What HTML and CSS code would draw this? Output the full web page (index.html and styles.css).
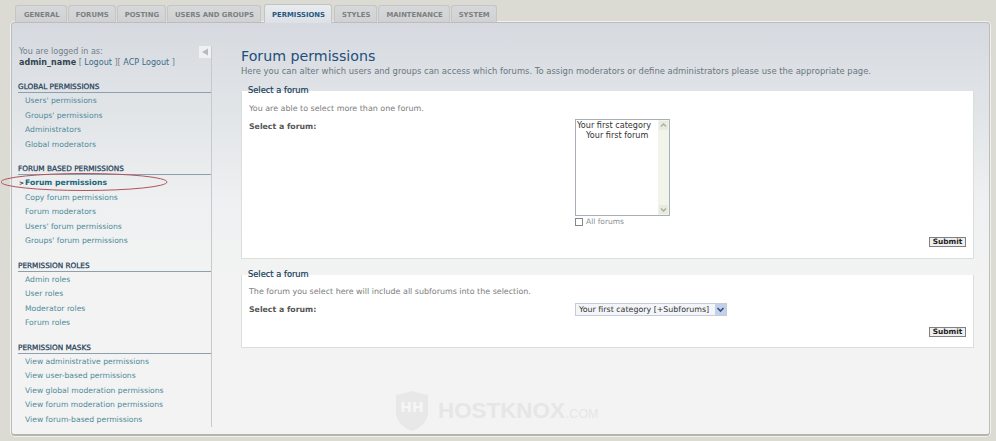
FILE: index.html
```html
<!DOCTYPE html>
<html lang="en">
<head>
<meta charset="utf-8">
<title>Forum permissions</title>
<link rel="stylesheet" href="styles.css">
</head>
<body>
<nav class="tabs">
  <a class="tab">GENERAL</a><a class="tab">FORUMS</a><a class="tab">POSTING</a><a class="tab">USERS AND GROUPS</a><a class="tab active">PERMISSIONS</a><a class="tab">STYLES</a><a class="tab">MAINTENANCE</a><a class="tab">SYSTEM</a>
</nav>
<div class="panel">
  <aside class="side">
    <div class="user">
      <div>You are logged in as:</div>
      <div><b>admin_name</b> [ <a>Logout</a> ][ <a>ACP Logout</a> ]</div>
      <span class="collapse"><svg width="12" height="12" viewBox="0 0 12 12"><rect width="12" height="12" fill="#eef0f2"/><path d="M9 2.500V9.500L3 6Z" fill="#b4bac0"/></svg></span>
    </div>
    <h3 class="head">GLOBAL PERMISSIONS</h3>
    <ul class="menu">
      <li>Users' permissions</li><li>Groups' permissions</li><li>Administrators</li><li>Global moderators</li>
    </ul>
    <h3 class="head">FORUM BASED PERMISSIONS</h3>
    <ul class="menu">
      <li class="current">Forum permissions</li><li>Copy forum permissions</li><li>Forum moderators</li><li>Users' forum permissions</li><li>Groups' forum permissions</li>
    </ul>
    <h3 class="head">PERMISSION ROLES</h3>
    <ul class="menu">
      <li>Admin roles</li><li>User roles</li><li>Moderator roles</li><li>Forum roles</li>
    </ul>
    <h3 class="head">PERMISSION MASKS</h3>
    <ul class="menu">
      <li>View administrative permissions</li><li>View user-based permissions</li><li>View global moderation permissions</li><li>View forum moderation permissions</li><li>View forum-based permissions</li>
    </ul>
  </aside>
  <main class="main">
    <h1 class="title">Forum permissions</h1>
    <p class="intro">Here you can alter which users and groups can access which forums. To assign moderators or define administrators please use the appropriate page.</p>
    <fieldset class="box first">
      <legend>Select a forum</legend>
      <p class="note">You are able to select more than one forum.</p>
      <div class="row">
        <label class="lbl">Select a forum:</label>
        <div class="field">
          <div class="listbox">
            <div class="opts"><div>Your first category</div><div class="sub">Your first forum</div></div>
            <div class="scroll">
              <span class="up"><svg width="9" height="9" viewBox="0 0 9 9"><path d="M2 5.500L4.500 3L7 5.500" fill="none" stroke="#a9ad9c" stroke-width="1.300"/></svg></span>
              <span class="down"><svg width="9" height="9" viewBox="0 0 9 9"><path d="M2 3.500L4.500 6L7 3.500" fill="none" stroke="#a9ad9c" stroke-width="1.300"/></svg></span>
            </div>
          </div>
          <div class="check"><span class="tick"></span>All forums</div>
        </div>
      </div>
      <div class="actions"><button class="submit">Submit</button></div>
    </fieldset>
    <fieldset class="box second">
      <legend>Select a forum</legend>
      <p class="note">The forum you select here will include all subforums into the selection.</p>
      <div class="row">
        <label class="lbl">Select a forum:</label>
        <div class="field">
          <div class="drop">Your first category [+Subforums]<span class="arrow"><svg width="9" height="9" viewBox="0 0 9 9"><path d="M1.500 3L4.500 6L7.500 3" fill="none" stroke="#34507c" stroke-width="1.600"/></svg></span></div>
        </div>
      </div>
      <div class="actions"><button class="submit">Submit</button></div>
    </fieldset>
  </main>
  <svg class="oval" width="170" height="20" viewBox="0 0 170 20"><ellipse cx="83" cy="10" rx="83" ry="8.500" fill="none" stroke="#b0555c" stroke-width="1"/></svg>
  <div class="mark">
    <svg width="34" height="42" viewBox="0 0 34 42"><path d="M1 5L17 1L33 5V22C33 32 25 38 17 41C9 38 1 32 1 22Z" fill="#e8e8e8"/><text x="17" y="22" text-anchor="middle" class="mark-hh">HH</text></svg>
    <span class="mark-name">HOSTKNOX</span><span class="mark-com">.COM</span>
  </div>
</div>
</body>
</html>
```
FILE: styles.css
```css
* { box-sizing: border-box; }
html, body { margin: 0; height: 100%; }
body {
  width: 996px;
  height: 441px;
  overflow: hidden;
  background: #dbdad3;
  font-family: "DejaVu Sans", Verdana, sans-serif;
  font-size: 8px;
  color: #666;
  padding: 4px 6px 0 11px;
}
.tabs {
  display: flex;
  gap: 1px;
  height: 18px;
  padding-left: 4px;
  position: relative;
  z-index: 1;
}
.tab {
  display: block;
  height: 17px;
  margin-top: 1px;
  padding: 4px 6px 0 7px;
  background: linear-gradient(#d6d8d9, #cfd1d2);
  border: 1px solid #c4c6c6;
  border-bottom: 0;
  border-radius: 3px 3px 0 0;
  font-weight: bold;
  font-size: 6.850px;
  line-height: 10px;
  color: #7c7f82;
  white-space: nowrap;
}
.tab:first-child { padding-left: 8px; }
.tab.active {
  height: 19px;
  margin: 0 1px 0 2px;
  padding-top: 5px;
  background: linear-gradient(#e8ecef, #dde1e5);
  border-color: #c0c4c6;
  color: #28587e;
}
.panel {
  position: relative;
  display: flex;
  width: 979px;
  height: 414px;
  padding: 23px 16px 0 6px;
  gap: 29px;
  background: linear-gradient(#d6dae0 0, #e2e5e8 90px, #eef0f1 180px, #f3f3f3 260px);
  border: 1px solid #b9bdbd;
  border-bottom: 2px solid #b4b6ae;
  border-radius: 4px;
  box-shadow: 0 0 0 1px #f1f1ee;
}
.side {
  width: 194px;
  height: 381px;
  flex: none;
  border-right: 1px solid #c6cacd;
}
.user {
  position: relative;
  height: 36px;
  padding-left: 1px;
  line-height: 11px;
  font-size: 8.050px;
  color: #72808b;
}
.user b { color: #33454f; }
.user a { color: #3b6a86; }
.collapse {
  position: absolute;
  right: 0;
  top: 0;
  width: 12px;
  height: 12px;
}
.head {
  margin: 0 0 1px;
  height: 11px;
  border-bottom: 1px solid #8da0ae;
  font-size: 7.300px;
  line-height: 9px;
  font-weight: normal;
  -webkit-text-stroke: 0.250px #1f4158;
  color: #1f4158;
  white-space: nowrap;
}
.menu {
  list-style: none;
  margin: 0 0 12px;
  padding: 0;
}
.menu li {
  height: 14.500px;
  line-height: 14px;
  padding-left: 7px;
  font-size: 7.650px;
  color: #4f8b9a;
  white-space: nowrap;
}
.menu .current {
  position: relative;
  font-weight: bold;
  color: #22657a;
}
.menu .current::before {
  content: ">";
  position: absolute;
  left: 1px;
  font-size: 6px;
  color: #333;
}
.main {
  width: 733px;
  flex: none;
  margin-top: 2px;
}
.title {
  margin: 0 0 2px;
  font-size: 14.200px;
  line-height: 16px;
  font-weight: normal;
  color: #1d4f7c;
}
.intro {
  margin: 0 0 8px;
  font-size: 8.420px;
  line-height: 11px;
  color: #6a7680;
  white-space: nowrap;
}
.box {
  margin: 0 0 10px;
  padding: 7px 7px 0;
  width: 733px;
  min-width: 0;
  background: #fff;
  border: 1px solid #dcdddd;
  border-top: 0;
}
.first { height: 174px; }
.second { height: 79px; padding-top: 6px; }
.box legend {
  padding: 0;
  margin-left: -1px;
  font-size: 8.300px;
  line-height: 11px;
  color: #17405c;
  -webkit-text-stroke: 0.200px #17405c;
}
.note {
  margin: 0 0 7px;
  height: 11px;
  line-height: 11px;
  font-size: 7.950px;
  color: #7b7b7b;
}
.row { display: flex; }
.lbl {
  width: 326px;
  flex: none;
  font-weight: bold;
  font-size: 7.800px;
  line-height: 11px;
  color: #555;
}
.listbox {
  display: flex;
  width: 95px;
  height: 97px;
  margin-top: -2px;
  background: #fff;
  border: 1px solid #a7b0b7;
  font-size: 8.100px;
  line-height: 9.500px;
  color: #333;
}
.opts { flex: 1; padding: 1px 0 0 1px; white-space: nowrap; }
.sub { padding-left: 9px; }
.scroll {
  position: relative;
  width: 11px;
  background: #f2f4ea;
}
.scroll span {
  position: absolute;
  left: 1px;
  width: 9px;
  height: 9px;
  display: flex;
  background: #e8eade;
}
.up { top: 1px; }
.down { bottom: 1px; }
.check {
  display: flex;
  align-items: center;
  gap: 3px;
  height: 11px;
  font-size: 7.500px;
  color: #8a8f93;
}
.tick {
  width: 8px;
  height: 8px;
  border: 1px solid #7e8a92;
  background: #fff;
}
.actions {
  display: flex;
  justify-content: flex-end;
}
.first .actions { margin-top: 10px; }
.second .actions { margin-top: 11px; }
.submit {
  width: 37px;
  height: 10px;
  padding: 0;
  background: #efefef;
  border: 1px solid #808080;
  font-family: inherit;
  font-size: 7.400px;
  font-weight: bold;
  line-height: 8px;
  color: #222;
}
.drop {
  position: relative;
  width: 152px;
  height: 13px;
  margin-top: -1px;
  padding-left: 3px;
  background: #f4f5f8;
  border: 1px solid #c4ccd8;
  font-size: 7.900px;
  line-height: 11px;
  color: #333;
  white-space: nowrap;
}
.arrow {
  position: absolute;
  right: 0;
  top: 0;
  width: 11px;
  height: 11px;
  display: flex;
  align-items: center;
  justify-content: center;
  background: #c2d0ea;
}
.oval {
  position: absolute;
  left: -11px;
  top: 149px;
  pointer-events: none;
}
.mark {
  position: absolute;
  left: 383px;
  top: 367px;
  display: flex;
  align-items: baseline;
  color: #e6e6e6;
}
.mark svg { align-self: flex-start; margin-right: 9px; }
.mark-hh { font-size: 14px; font-weight: bold; fill: #f6f6f6; }
.mark-name {
  font-family: "Liberation Sans", Arial, sans-serif;
  font-weight: bold;
  font-size: 22.400px;
  line-height: 42px;
}
.mark-com {
  font-family: "Liberation Sans", Arial, sans-serif;
  font-size: 12.500px;
  margin-left: 1px;
}
```
